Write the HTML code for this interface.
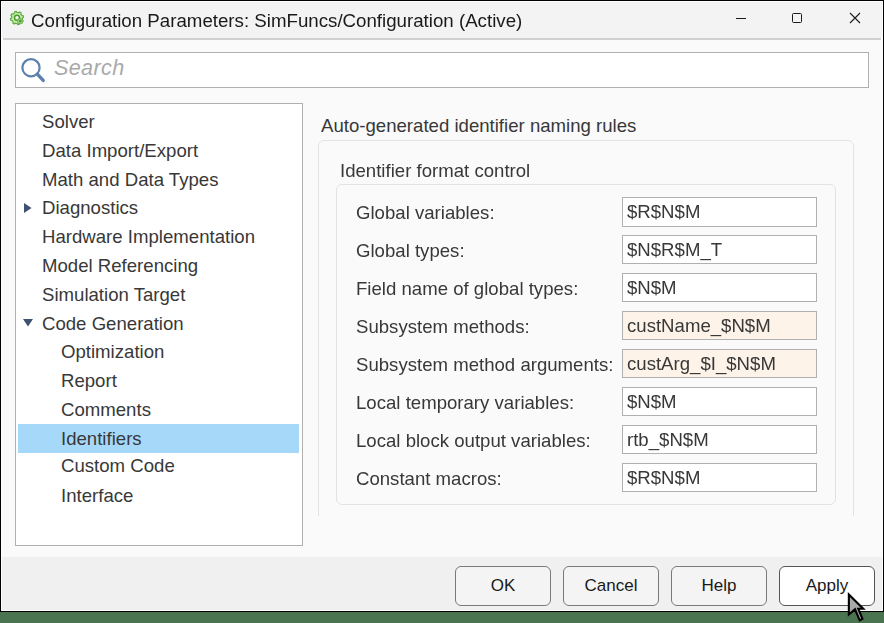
<!DOCTYPE html>
<html><head><meta charset="utf-8">
<style>
*{box-sizing:border-box;margin:0;padding:0}
html,body{width:884px;height:623px;overflow:hidden;background:#4a7350;font-family:"Liberation Sans",sans-serif;color:#262626}
.abs{position:absolute}
#win{position:absolute;left:0;top:0;width:884px;height:612px;background:#000}
#inner{position:absolute;left:1px;top:1px;width:882px;height:610px;background:#fff}
#title{position:absolute;left:1px;top:1px;width:880px;height:36px;background:#f3f3f3}
#sep{position:absolute;left:2px;top:37px;width:878px;height:2px;background:#d0d0d0}
#content{position:absolute;left:1px;top:39px;width:880px;height:517px;background:#fafafa}
#bottom{position:absolute;left:1px;top:556px;width:880px;height:53px;background:#f0f0f0}
.ttl{position:absolute;left:31px;top:7px;will-change:transform;font-size:18.7px;line-height:28px;color:#1a1a1a;white-space:nowrap}
#search{position:absolute;left:15px;top:52px;width:854px;height:36px;border:1px solid #b0b0b0;background:#fff}
.ph{position:absolute;left:54px;top:52.8px;letter-spacing:0.35px;font-size:21.6px;font-style:italic;color:#a9a9a9;line-height:30px;white-space:nowrap}
#tree{position:absolute;left:15px;top:103px;width:288px;height:443px;border:1px solid #b0b0b0;background:#fff}
.ti{position:absolute;font-size:19px;line-height:28.8px;height:28.8px;white-space:nowrap;color:#383838;transform:scaleX(0.979);transform-origin:0 0;margin-top:0.8px}
.sc{font-size:19px!important;transform:scaleX(0.979);transform-origin:0 0;margin-top:0.8px}
#sel{position:absolute;left:18px;top:424px;width:281px;height:28.8px;background:#a6d8fa}
.grp{position:absolute;border:1px solid #e3e3e3;border-radius:6px}
.lbl{position:absolute;left:356px;font-size:19px;line-height:30px;white-space:nowrap;color:#383838;transform:scaleX(0.979);transform-origin:0 0;margin-top:0.8px}
.fld{position:absolute;left:622px;width:195px;height:29px;border:1px solid #b0b0b0;background:#fff}
.ft{position:absolute;left:626.8px;font-size:19px;line-height:30px;white-space:nowrap;color:#383838;transform:scaleX(0.979);transform-origin:0 0;margin-top:-0.2px}
.fld.hl{background:#fdf3e9}
.btn{position:absolute;top:566px;width:96px;height:40px;border:1px solid #7a7a7a;border-radius:6px;background:#f4f4f4;font-size:17px;line-height:38px;text-align:center;color:#1a1a1a}
</style></head><body>
<div id="win"><div id="inner">
<div id="title"></div>
<div id="sep"></div>
<div id="content"></div>
<div id="bottom"></div>
</div></div>

<!-- gear icon -->
<svg class="abs" style="left:9px;top:10px" width="18" height="18" viewBox="0 0 18 18">
  <path d="M13.39 9.09L13.22 9.72L14.03 10.69L13.17 12.10L11.94 11.84L11.04 12.58L10.48 12.91L10.36 14.16L8.75 14.56L8.07 13.50L6.91 13.39L6.28 13.22L5.31 14.03L3.90 13.17L4.16 11.94L3.42 11.04L3.09 10.48L1.84 10.36L1.44 8.75L2.50 8.07L2.61 6.91L2.78 6.28L1.97 5.31L2.83 3.90L4.06 4.16L4.96 3.42L5.52 3.09L5.64 1.84L7.25 1.44L7.93 2.50L9.09 2.61L9.72 2.78L10.69 1.97L12.10 2.83L11.84 4.06L12.58 4.96L12.91 5.52L14.16 5.64L14.56 7.25L13.50 7.93Z" fill="#c4ebab" stroke="#5eac41" stroke-width="1.2" stroke-linejoin="round"/>
  <circle cx="8" cy="7.8" r="2.5" fill="#f4fbef" stroke="#4a9c30" stroke-width="1.5"/>
  <circle cx="11.3" cy="11.1" r="2.7" fill="#b2df97" stroke="#5aa83e" stroke-width="0.9"/>
  <circle cx="11.3" cy="11.1" r="1.5" fill="#4e9e33"/>
</svg>
<div class="ttl">Configuration Parameters: SimFuncs/Configuration (Active)</div>

<!-- window controls -->
<div class="abs" style="left:736px;top:18px;width:10px;height:1px;background:#1a1a1a"></div>
<div class="abs" style="left:792px;top:13px;width:10px;height:10px;border:1px solid #1a1a1a;border-radius:1.5px"></div>
<svg class="abs" style="left:849px;top:12px" width="12" height="12" viewBox="0 0 12 12">
  <path d="M1 1L11 11M11 1L1 11" stroke="#1a1a1a" stroke-width="1.1"/>
</svg>

<div id="search"></div>
<svg class="abs" style="left:19px;top:56px" width="28" height="28" viewBox="0 0 28 28">
  <circle cx="12" cy="11.7" r="8.6" fill="none" stroke="#5b80ad" stroke-width="2.2"/>
  <path d="M18.3 18.2L24.2 24.4" stroke="#5b80ad" stroke-width="3.4" stroke-linecap="round"/>
</svg>
<div class="ph">Search</div>

<div id="tree"></div>
<div id="sel"></div>
<div class="ti" style="left:41.9px;top:107.2px">Solver</div>
<div class="ti" style="left:41.9px;top:136px">Data Import/Export</div>
<div class="ti" style="left:41.9px;top:164.8px">Math and Data Types</div>
<div class="ti" style="left:41.9px;top:193.6px">Diagnostics</div>
<div class="ti" style="left:41.9px;top:222.4px">Hardware Implementation</div>
<div class="ti" style="left:41.9px;top:251.2px">Model Referencing</div>
<div class="ti" style="left:41.9px;top:280px">Simulation Target</div>
<div class="ti" style="left:41.9px;top:308.8px">Code Generation</div>
<div class="ti" style="left:60.9px;top:337.6px">Optimization</div>
<div class="ti" style="left:60.9px;top:366.4px">Report</div>
<div class="ti" style="left:60.9px;top:395.2px">Comments</div>
<div class="ti" style="left:60.9px;top:424px">Identifiers</div>
<div class="ti" style="left:60.9px;top:451.6px">Custom Code</div>
<div class="ti" style="left:60.9px;top:481.6px">Interface</div>
<svg class="abs" style="left:0;top:0" width="40" height="340" viewBox="0 0 40 340"><path d="M24 203L31.6 208L24 213Z" fill="#3e5274"/><path d="M23 319L33 319L28 326.6Z" fill="#3e5274"/></svg>


<!-- right panel -->
<div class="abs sc" style="left:321px;top:111px;font-size:18.6px;line-height:28px;white-space:nowrap;color:#383838">Auto-generated identifier naming rules</div>
<div class="abs" style="left:0;top:0;width:884px;height:516px;overflow:hidden">
  <div class="grp" style="left:318px;top:140px;width:536px;height:420px"></div>
</div>
<div class="abs sc" style="left:340px;top:156px;font-size:18.6px;line-height:28px;white-space:nowrap;color:#383838">Identifier format control</div>
<div class="grp" style="left:336px;top:184px;width:500px;height:321px"></div>

<div class="lbl" style="top:197px">Global variables:</div>
<div class="lbl" style="top:235px">Global types:</div>
<div class="lbl" style="top:273px">Field name of global types:</div>
<div class="lbl" style="top:311px">Subsystem methods:</div>
<div class="lbl" style="top:349px">Subsystem method arguments:</div>
<div class="lbl" style="top:387px">Local temporary variables:</div>
<div class="lbl" style="top:425px">Local block output variables:</div>
<div class="lbl" style="top:463px">Constant macros:</div>

<div class="fld" style="top:197px;height:30px"></div><div class="ft" style="top:197px">$R$N$M</div>
<div class="fld" style="top:235px"></div><div class="ft" style="top:235px">$N$R$M_T</div>
<div class="fld" style="top:273px"></div><div class="ft" style="top:273px">$N$M</div>
<div class="fld hl" style="top:311px"></div><div class="ft" style="top:311px">custName_$N$M</div>
<div class="fld hl" style="top:349px"></div><div class="ft" style="top:349px">custArg_$I_$N$M</div>
<div class="fld" style="top:387px"></div><div class="ft" style="top:387px">$N$M</div>
<div class="fld" style="top:425px"></div><div class="ft" style="top:425px">rtb_$N$M</div>
<div class="fld" style="top:463px"></div><div class="ft" style="top:463px">$R$N$M</div>

<!-- buttons -->
<div class="btn" style="left:455px">OK</div>
<div class="btn" style="left:563px">Cancel</div>
<div class="btn" style="left:671px">Help</div>
<div class="btn" style="left:779px;background:#fff;border-color:#555">Apply</div>

<!-- cursor -->
<svg class="abs" style="left:0;top:0" width="884" height="623" viewBox="0 0 884 623">
  <path d="M848.85 594.52L863.24 608.75L858.22 608.75L862.46 618.83L859.71 620.33L855.01 609.27L848.85 614.52Z" fill="#a9a9a9" stroke="#000" stroke-width="2.1" stroke-linejoin="miter"/>
</svg>
</body></html>
